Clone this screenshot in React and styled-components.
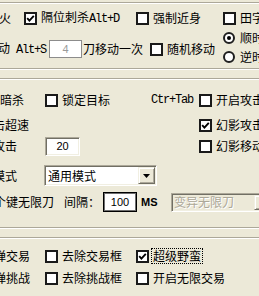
import React from "react";
import styled, { createGlobalStyle, css } from "styled-components";

const Global = createGlobalStyle`
  html, body { margin: 0; padding: 0; background: #ECE9D8; overflow: hidden; }
  body {
    font-family: "Noto Sans CJK SC", "Noto Sans", sans-serif;
    font-size: 12px;
    color: #000;
  }
`;

const Page = styled.div`
  width: 259px;
  height: 296px;
  overflow: hidden;
  background: #ECE9D8;
  padding-top: 2px;
  box-sizing: border-box;
`;

const Group = styled.section`
  margin: ${(p) => p.$mt || 0}px -12px 0;
  padding: ${(p) => p.$pt}px 12px ${(p) => p.$pb}px;
  border-top: 1px solid #ACA899;
  border-bottom: 1px solid #ACA899;
  box-shadow: inset 0 1px 0 #fff, 0 1px 0 #fff;
`;

const Split = styled.div`
  display: flex;
  height: ${(p) => p.$h}px;
  align-items: flex-start;
`;

const Column = styled.div`
  display: flex;
  flex-direction: column;
  gap: ${(p) => p.$gap || 0}px;
  width: ${(p) => (p.$w ? `${p.$w}px` : "auto")};
  flex: none;
`;

const Stack = styled.div`
  display: flex;
  flex-direction: column;
  gap: ${(p) => p.$gap || 0}px;
`;

const Row = styled.div`
  display: flex;
  align-items: center;
  height: ${(p) => p.$h || 20}px;
  margin-top: ${(p) => p.$mt || 0}px;
  white-space: nowrap;
`;

const LabelCell = styled.span`
  flex: none;
  width: ${(p) => p.$end}px;
  display: flex;
  justify-content: flex-end;
  white-space: nowrap;
`;

const Text = styled.span`
  flex: none;
  white-space: nowrap;
  line-height: 14px;
  margin-left: ${(p) => p.$ml || 0}px;
`;

const Key = styled.span`
  font-family: "Liberation Mono", "DejaVu Sans Mono", monospace;
  font-size: 12px;
  letter-spacing: -1.2px;
  white-space: pre;
  margin-left: ${(p) => p.$ml || 0}px;
  flex: none;
`;

const Unit = styled.span`
  font-family: "Liberation Sans", Arial, sans-serif;
  font-size: 11px;
  font-weight: bold;
  margin-left: ${(p) => p.$ml || 0}px;
  width: 12px;
  flex: none;
`;

const CheckWrap = styled.label`
  flex: none;
  display: inline-flex;
  align-items: center;
  gap: ${(p) => p.$gap || 4}px;
  margin-left: ${(p) => p.$ml || 0}px;
`;

const Box = styled.span`
  flex: none;
  width: 13px;
  height: 13px;
  box-sizing: border-box;
  border: 2px solid #1a1a1a;
  background: #fff;
  display: flex;
  align-items: center;
  justify-content: center;
`;

const RadioDot = styled.span`
  flex: none;
  width: 12px;
  height: 12px;
  box-sizing: border-box;
  border-radius: 50%;
  border: 2px solid #1f1f1f;
  background: #fff;
  display: flex;
  align-items: center;
  justify-content: center;
  &::after {
    content: "";
    width: 4px;
    height: 4px;
    border-radius: 50%;
    background: ${(p) => (p.$on ? "#000" : "transparent")};
  }
`;

const FocusText = styled.span`
  line-height: 14px;
  padding: 0 1px;
  margin-left: -1px;
  outline: 1px dotted #000;
  outline-offset: 0;
`;

const editVariants = {
  flat: css`
    border: 1px solid #8c8c8c;
    color: #9a9a9a;
  `,
  sunken: css`
    border: 1px solid;
    border-color: #ACA899 #fff #fff #ACA899;
    box-shadow: inset 1px 1px 0 #716F64, inset -1px -1px 0 #F1EFE2;
    color: #000;
  `,
  focus: css`
    border: 1px solid #000;
    box-shadow: inset 0 0 0 1px #6e6e6e;
    color: #000;
  `,
};

const Edit = styled.input`
  flex: none;
  margin: 0 0 0 ${(p) => p.$ml || 0}px;
  width: ${(p) => p.$w}px;
  height: ${(p) => p.$h}px;
  box-sizing: border-box;
  padding: 0;
  background: #fff;
  text-align: center;
  font-family: "Liberation Sans", Arial, sans-serif;
  font-size: 11px;
  outline: none;
  ${(p) => editVariants[p.$variant]}
`;

const Combo = styled.div`
  flex: none;
  margin-left: ${(p) => p.$ml || 0}px;
  width: ${(p) => p.$w}px;
  height: ${(p) => p.$h}px;
  box-sizing: border-box;
  display: flex;
  border: 1px solid;
  border-color: #ACA899 #fff #fff #ACA899;
  box-shadow: inset 1px 1px 0 #716F64, inset -1px -1px 0 #F1EFE2;
  padding: 1px;
  background: ${(p) => (p.$disabled ? "#ECE9D8" : "#fff")};
`;

const ComboText = styled.span`
  flex: 1;
  display: flex;
  align-items: center;
  padding-left: ${(p) => (p.$disabled ? 1 : 2)}px;
  line-height: 14px;
  color: ${(p) => (p.$disabled ? "#ACA899" : "#000")};
  text-shadow: ${(p) => (p.$disabled ? "1px 1px 0 #fff" : "none")};
`;

const ComboButton = styled.span`
  flex: none;
  width: 17px;
  box-sizing: border-box;
  background: #ECE9D8;
  border: 1px solid;
  border-color: #F1EFE2 #716F64 #716F64 #F1EFE2;
  box-shadow: inset 1px 1px 0 #fff, inset -1px -1px 0 #ACA899;
  display: flex;
  align-items: center;
  justify-content: center;
`;

const CheckMark = () => (
  <svg width="9" height="9" viewBox="0 0 9 9">
    <path d="M1.2 4.2 L3.4 6.6 L7.8 1.8" fill="none" stroke="#000" strokeWidth="1.9" />
  </svg>
);

const Arrow = ({ color = "#000" }) => (
  <svg width="7" height="4" viewBox="0 0 7 4">
    <polygon points="0,0 7,0 3.5,4" fill={color} />
  </svg>
);

const Check = ({ on, ml, children, focus }) => (
  <CheckWrap $ml={ml}>
    <Box>{on && <CheckMark />}</Box>
    {focus ? <FocusText>{children}</FocusText> : <Text>{children}</Text>}
  </CheckWrap>
);

const Radio = ({ on, children }) => (
  <CheckWrap $gap={5}>
    <RadioDot $on={on} />
    <Text>{children}</Text>
  </CheckWrap>
);

export default function App() {
  return (
    <>
      <Global />
      <Page>
        <Group $pt={5} $pb={0}>
          <Split $h={60}>
            <Column $w={223} $gap={11}>
              <Row>
                <LabelCell $end={11}><Text>自动烈火</Text></LabelCell>
                <Check ml={13} on>隔位刺杀<Key>Alt+D</Key></Check>
                <Check ml={17}>强制近身</Check>
              </Row>
              <Row>
                <LabelCell $end={46}><Text>自动移动<Key> Alt+S</Key></Text></LabelCell>
                <Edit $ml={3} $w={33} $h={18} $variant="flat" readOnly value="4" />
                <Text $ml={1}>刀移动一次</Text>
                <Check ml={7}>随机移动</Check>
              </Row>
            </Column>
            <Column>
              <Row><Check>田字走位</Check></Row>
              <Row><Radio on>顺时针</Radio></Row>
              <Row $h={18}><Radio>逆时针</Radio></Row>
            </Column>
          </Split>
        </Group>

        <Group $mt={9} $pt={11} $pb={15}>
          <Stack>
            <Row>
              <LabelCell $end={24}><Text>自动暗杀</Text></LabelCell>
              <Check ml={21}>锁定目标</Check>
              <Key $ml={41}>Ctr+Tab</Key>
              <Check ml={6}>开启攻击模式</Check>
            </Row>
            <Row $mt={5}>
              <LabelCell $end={29}><Text>攻击超速</Text></LabelCell>
              <Check ml={170} on>幻影攻击</Check>
            </Row>
            <Row $mt={1}>
              <LabelCell $end={17}><Text>连续攻击</Text></LabelCell>
              <Edit $ml={28} $w={35} $h={19} $variant="sunken" readOnly value="20" />
              <Check ml={119}>幻影移动</Check>
            </Row>
            <Row $h={21} $mt={9}>
              <LabelCell $end={17}><Text>攻击模式</Text></LabelCell>
              <Combo $ml={27} $w={113} $h={21}>
                <ComboText>通用模式</ComboText>
                <ComboButton><Arrow /></ComboButton>
              </Combo>
            </Row>
            <Row $h={20} $mt={6}>
              <LabelCell $end={54}><Text>个键无限刀</Text></LabelCell>
              <Text $ml={10}>间隔：</Text>
              <Edit $ml={3} $w={34} $h={20} $variant="focus" readOnly value="100" />
              <Unit $ml={4}>MS</Unit>
              <Combo $ml={18} $w={102} $h={19} $disabled>
                <ComboText $disabled>变异无限刀</ComboText>
                <ComboButton><Arrow color="#ACA899" /></ComboButton>
              </Combo>
            </Row>
          </Stack>
        </Group>

        <Group $mt={9} $pt={8} $pb={20}>
          <Stack $gap={2}>
            <Row>
              <LabelCell $end={30}><Text>禁止弹交易</Text></LabelCell>
              <Check ml={15}>去除交易框</Check>
              <Check ml={14} on focus>超级野蛮</Check>
            </Row>
            <Row>
              <LabelCell $end={30}><Text>禁止弹挑战</Text></LabelCell>
              <Check ml={15}>去除挑战框</Check>
              <Check ml={14}>开启无限交易</Check>
            </Row>
          </Stack>
        </Group>
      </Page>
    </>
  );
}
